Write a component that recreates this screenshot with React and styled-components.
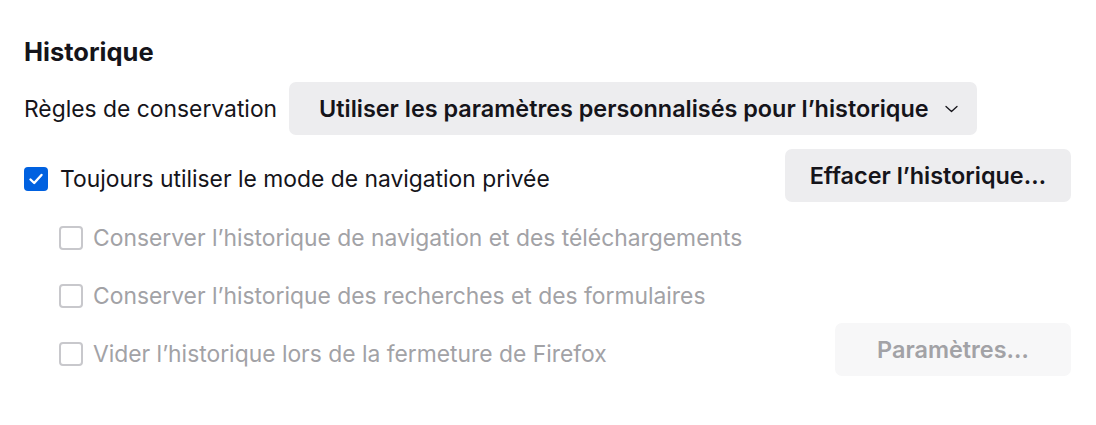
import React from 'react';
import styled, {createGlobalStyle} from 'styled-components';

const GlobalStyle = createGlobalStyle`
    body {
        margin: 0;
        background: #fff;
        font-family: Inter, "Noto Sans", "Liberation Sans", sans-serif;
        color: #15141a;
    }
`;

const Section = styled.section`
    padding: 35px 25px 0 24px;
`;

const Heading = styled.h2`
    margin: 0;
    font-size: 25.5px;
    font-weight: 700;
    line-height: 34px;
`;

const Row = styled.div`
    display: flex;
    align-items: center;
    justify-content: ${p => (p.$spread ? 'space-between' : 'flex-start')};
    gap: 12px;
    margin-top: ${p => p.$top || 0}px;
    min-height: 53px;
`;

const Label = styled.span`
    font-size: 22.85px;
    line-height: 28px;
    color: ${p => (p.$disabled ? '#a2a2a6' : '#15141a')};
`;

const Button = styled.button`
    height: 53px;
    padding: 0 ${p => p.$right ?? 25}px 0 ${p => p.$left ?? 25}px;
    border: none;
    border-radius: 7px;
    background: ${p => (p.disabled ? '#f7f7f8' : '#ededef')};
    color: ${p => (p.disabled ? '#a2a2a6' : '#15141a')};
    font-family: inherit;
    font-size: 23.4px;
    font-weight: 600;
    display: flex;
    align-items: center;
    justify-content: center;
    gap: 16px;
    cursor: ${p => (p.disabled ? 'default' : 'pointer')};
    width: ${p => (p.$width ? `${p.$width}px` : 'auto')};
`;

const CheckRow = styled.label`
    display: flex;
    align-items: center;
    gap: ${p => p.$gap || 12}px;
    margin-top: ${p => p.$shift || 0}px;
`;

const Box = styled.span`
    width: 24px;
    height: 24px;
    box-sizing: border-box;
    border-radius: 4px;
    flex-shrink: 0;
    display: flex;
    align-items: center;
    justify-content: center;
    background: ${p => (p.$checked ? '#0061e0' : '#fff')};
    border: ${p => (p.$checked ? 'none' : '2px solid #c8c8cc')};
`;

const SubList = styled.div`
    padding-left: 35px;
`;

function Checkbox({checked, disabled, children, gap, shift}) {
    return (
        <CheckRow $gap={gap} $shift={shift}>
            <Box $checked={checked}>
                {checked && (
                    <svg width="16" height="16" viewBox="0 0 16 16">
                        <path d="M2.5 8.5 L6.2 12 L13.5 4" fill="none" stroke="#fff" strokeWidth="2.4" strokeLinecap="round" strokeLinejoin="round" />
                    </svg>
                )}
            </Box>
            <Label $disabled={disabled}>{children}</Label>
        </CheckRow>
    );
}

const Chevron = () => (
    <svg width="13" height="8" viewBox="0 0 13 8">
        <path d="M1 1.5 L6.5 6.5 L12 1.5" fill="none" stroke="#15141a" strokeWidth="1.3" strokeLinecap="round" strokeLinejoin="round" />
    </svg>
);

const App = () => (
    <>
        <GlobalStyle />
        <Section>
            <Heading>Historique</Heading>
            <Row $top={13}>
                <Label>Règles de conservation</Label>
                <Button $left={30} $right={19}>
                    Utiliser les paramètres personnalisés pour l’historique
                    <Chevron />
                </Button>
            </Row>
            <Row $top={14} $spread>
                <Checkbox checked shift={6}>Toujours utiliser le mode de navigation privée</Checkbox>
                <Button>Effacer l’historique…</Button>
            </Row>
            <SubList>
                <Row $top={9}>
                    <Checkbox disabled gap={10}>Conserver l’historique de navigation et des téléchargements</Checkbox>
                </Row>
                <Row $top={5}>
                    <Checkbox disabled gap={10}>Conserver l’historique des recherches et des formulaires</Checkbox>
                </Row>
                <Row $top={1} $spread>
                    <Checkbox disabled gap={10} shift={9}>Vider l’historique lors de la fermeture de Firefox</Checkbox>
                    <Button disabled $width={236}>Paramètres…</Button>
                </Row>
            </SubList>
        </Section>
    </>
);

export default App;
